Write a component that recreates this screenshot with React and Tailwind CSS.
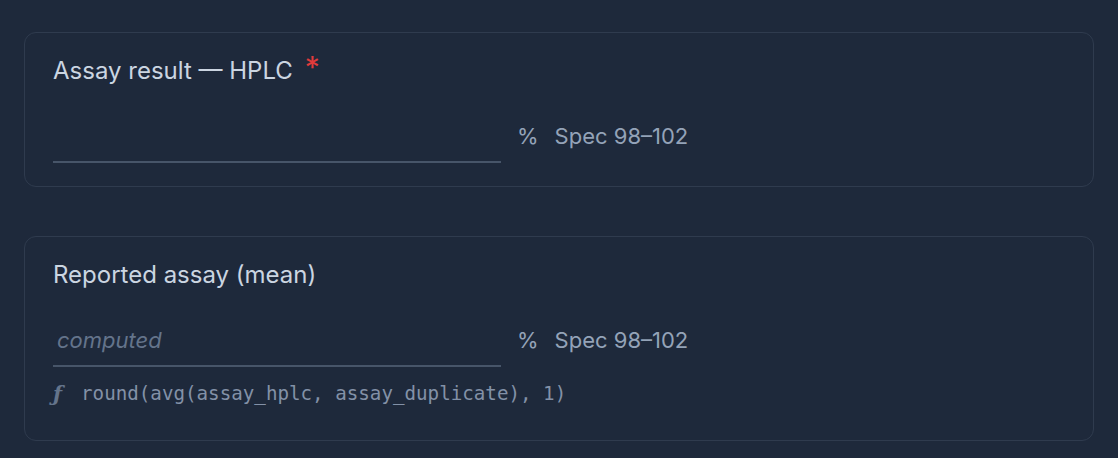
export default function App() {
  const sans = { fontFamily: 'Inter, "Noto Sans", sans-serif' };
  return (
    <div className="min-h-screen bg-[#1e293b] px-6 pt-8 pb-4" style={sans}>
      <div className="flex flex-col gap-[49px]">
        <section className="h-[155px] rounded-xl border border-[#2f3b4e] px-7 pt-6">
          <label className="flex h-7 items-center text-[24px] text-[#cbd5e1]">
            Assay result — HPLC
            <span className="ml-3 -mt-2 text-[30px] leading-none text-[#e23b3b]">*</span>
          </label>
          <div className="mt-[30px] flex items-center gap-4">
            <input className="h-12 w-[448px] border-b-2 border-[#475569] bg-transparent text-[22px] text-[#cbd5e1] outline-none" />
            <span className="pb-[6px] text-[22px] text-[#94a3b8]">%</span>
            <span className="pb-[6px] text-[22px] text-[#94a3b8]">Spec 98–102</span>
          </div>
        </section>

        <section className="h-[205px] rounded-xl border border-[#2f3b4e] px-7 pt-6">
          <label className="flex h-7 items-center text-[24px] text-[#cbd5e1]">Reported assay (mean)</label>
          <div className="mt-[30px] flex items-center gap-4">
            <input
              readOnly
              placeholder="computed"
              className="h-12 w-[448px] border-b-2 border-[#475569] bg-transparent px-1 pb-1 text-[22px] italic text-[#cbd5e1] outline-none placeholder:text-[#64748b]"
            />
            <span className="pb-[6px] text-[22px] text-[#94a3b8]">%</span>
            <span className="pb-[6px] text-[22px] text-[#94a3b8]">Spec 98–102</span>
          </div>
          <div className="mt-[14px] flex h-[26px] items-center gap-[19px] text-[#8391a7]">
            <span className="text-[21px] font-bold italic text-[#64748b]" style={{ fontFamily: '"DejaVu Serif", serif' }}>
              ƒ
            </span>
            <span className="text-[19.2px]" style={{ fontFamily: '"DejaVu Sans Mono", monospace' }}>
              round(avg(assay_hplc, assay_duplicate), 1)
            </span>
          </div>
        </section>
      </div>
    </div>
  );
}
